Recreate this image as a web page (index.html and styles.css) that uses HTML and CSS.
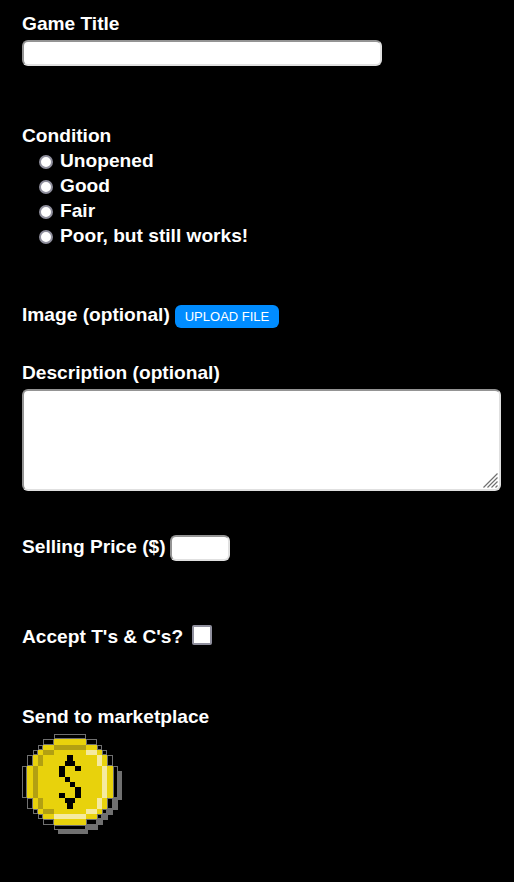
FILE: index.html
```html
<!DOCTYPE html>
<html lang="en">
<head>
<meta charset="utf-8">
<title>Sell a game</title>
<link rel="stylesheet" href="styles.css">
</head>
<body>
<form class="form">
  <div class="field title-field">
    <label for="title">Game Title</label>
    <input class="box title-input" id="title" type="text">
  </div>
  <div class="field condition">
    <span class="legend">Condition</span>
    <label class="option"><input class="radio" type="radio" name="condition"><span>Unopened</span></label>
    <label class="option"><input class="radio" type="radio" name="condition"><span>Good</span></label>
    <label class="option"><input class="radio" type="radio" name="condition"><span>Fair</span></label>
    <label class="option"><input class="radio" type="radio" name="condition"><span>Poor, but still works!</span></label>
  </div>
  <div class="row image-field">
    <span class="legend">Image (optional)</span>
    <button class="upload" type="button">UPLOAD FILE</button>
  </div>
  <div class="field description">
    <label for="description">Description (optional)</label>
    <div class="area-wrap">
      <textarea class="box area" id="description"></textarea>
      <svg class="grip" width="15" height="15" viewBox="0 0 15 15"><path d="M.5 14.500l14-14M4.500 14.500l10-10M8.500 14.500l6-6M12.500 14.500l2-2"/></svg>
    </div>
  </div>
  <div class="row price-field">
    <label for="price">Selling Price ($)</label>
    <input class="box price" id="price" type="text">
  </div>
  <div class="row terms">
    <label for="terms">Accept T's &amp; C's?</label>
    <input class="check" id="terms" type="checkbox">
  </div>
  <div class="field send">
    <span class="legend">Send to marketplace</span>
    <button class="coin" type="button" aria-label="Send">
      <svg width="100" height="100" viewBox="0 0 100 100" shape-rendering="crispEdges">
        <path class="shade" d="M95 37H100V66H96V76H91V81H86V86H81V91H76V96H66V100H36V96H60V80H80V60H95Z"/>
        <g class="edge">
          <path d="M32.500.5h31v4h-31zM21.500 5.500h10v5h-10zM64.500 5.500h10v5h-10zM16.500 11.500h4v4h-4zM75.500 11.500h4v4h-4zM11.500 16.500h4v4h-4zM80.500 16.500h4v4h-4zM5.500 21.500h5v10h-5zM85.500 21.500h5v10h-5zM.5 32.500h4v31h-4zM91.500 32.500h4v31h-4z"/>
          <path d="M5.500 64.500h5v10h-5zM85.500 64.500h5v10h-5zM11.500 75.500h4v4h-4zM80.500 75.500h4v4h-4zM16.500 80.500h4v4h-4zM75.500 80.500h4v4h-4zM21.500 85.500h10v5h-10zM64.500 85.500h10v5h-10zM32.500 91.500h31v4h-31z"/>
        </g>
        <path class="gold" d="M32 5H64V11H75V16H80V21H85V32H91V64H85V75H80V80H75V85H64V91H32V85H21V80H16V75H11V64H5V32H11V21H16V16H21V11H32Z"/>
        <path class="dark" d="M32 11h32v5h-32zM21 16h11v5h-11zM16 21h5v11h-5zM11 32h5v32h-5zM16 64h5v11h-5zM21 75h11v5h-11z"/>
        <path class="light" d="M64 16h11v5h-11zM75 21h5v11h-5zM80 32h5v32h-5zM75 64h5v11h-5zM64 75h11v5h-11zM32 80h32v5h-32z"/>
        <path d="M45 21h6v6h-6zM43 27h10v5h-10zM37 32h6v11h-6zM53 32h6v5h-6zM43 43h5v5h-5zM48 48h5v5h-5zM53 53h6v11h-6zM37 59h6v5h-6zM43 64h10v5h-10zM45 69h6v6h-6z"/>
      </svg>
    </button>
  </div>
</form>
</body>
</html>
```
FILE: styles.css
```css
* { box-sizing: border-box; }
body {
  margin: 0;
  background: #000;
  color: #fff;
  font: bold 19.15px/24px "Liberation Sans", Arial, sans-serif;
}
.form { padding: 12px 13px 0 22px; }
.field { display: flex; flex-direction: column; align-items: flex-start; }
.row { display: flex; align-items: flex-start; }
.box {
  display: block;
  margin: 0;
  padding: 0;
  background: #fff;
  border: 2px solid;
  border-color: #949494 #e0e0e0 #e0e0e0 #949494;
  border-radius: 6px;
  outline: none;
}
.title-field { gap: 4px; }
.title-input { width: 360px; height: 26px; }
.condition { margin-top: 58px; }
.legend { display: block; }
.option { display: flex; height: 25px; gap: 7px; padding-left: 17px; }
.condition .legend { height: 25px; }
.radio, .check {
  appearance: none;
  flex: none;
  margin: 0;
  background: #fff;
  border: 2px solid #8f8f9d;
}
.radio { width: 14px; height: 14px; margin-top: 6px; border-radius: 50%; }
.image-field { margin-top: 54px; }
.image-field .legend { width: 153px; }
.upload {
  width: 104px;
  height: 23px;
  margin-top: 2px;
  padding: 0;
  border: 0;
  border-radius: 6px;
  background: #008cff;
  color: #fff;
  font: 13px/23px "Liberation Sans", Arial, sans-serif;
}
.image-field { height: 26px; }
.description { margin-top: 32px; gap: 4px; }
.area-wrap { position: relative; width: 479px; height: 102px; }
.area { width: 100%; height: 100%; resize: none; }
.grip { position: absolute; right: 3px; bottom: 3px; fill: none; stroke: #707070; stroke-width: 1.2; }
.price-field { margin-top: 44px; height: 27px; }
.price-field label { width: 148px; }
.price { width: 60px; height: 26px; }
.terms { margin-top: 63px; height: 24px; }
.terms label { width: 170px; }
.check { width: 20px; height: 20px; border-radius: 2px; }
.send { margin-top: 56px; gap: 5px; }
.coin { display: block; width: 100px; height: 100px; padding: 0; border: 0; background: none; }
.coin svg { display: block; }
.shade { fill: #707070; }
.edge { fill: #000; stroke: #707070; }
.gold { fill: #e8d20c; }
.dark { fill: #b2a012; }
.light { fill: #f5eaa0; }
```
